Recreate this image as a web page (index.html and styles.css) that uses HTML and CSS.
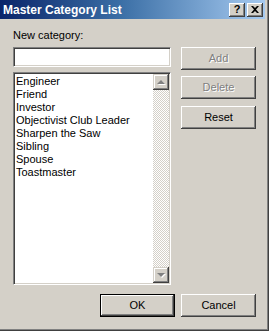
FILE: index.html
```html
<!DOCTYPE html>
<html>
<head>
<meta charset="utf-8">
<link rel="stylesheet" href="styles.css">
</head>
<body>
<div class="window">
  <div class="titlebar">
    <span class="title">Master Category List</span>
    <div class="caption-buttons">
      <span class="cap-btn help">?</span>
      <span class="cap-btn close">
        <svg width="8" height="7" viewBox="0 0 8 7"><path d="M0 0h2l2 2 2-2h2L5 3.5 8 7H6L4 5 2 7H0l3-3.5z" fill="#000"/></svg>
      </span>
    </div>
  </div>
  <div class="content">
    <div class="label">New category:</div>
    <div class="main">
      <div class="left">
        <div class="textbox"></div>
        <div class="listbox">
          <ul class="items">
            <li>Engineer</li>
            <li>Friend</li>
            <li>Investor</li>
            <li>Objectivist Club Leader</li>
            <li>Sharpen the Saw</li>
            <li>Sibling</li>
            <li>Spouse</li>
            <li>Toastmaster</li>
          </ul>
          <div class="scrollbar">
            <div class="sb-btn"><span class="arrow up"></span></div>
            <div class="sb-track"></div>
            <div class="sb-btn"><span class="arrow down"></span></div>
          </div>
        </div>
      </div>
      <div class="right">
        <div class="btn disabled add">Add</div>
        <div class="btn disabled delete">Delete</div>
        <div class="btn reset">Reset</div>
      </div>
      <div class="footer">
        <div class="btn default">OK</div>
        <div class="btn">Cancel</div>
      </div>
    </div>
  </div>
</div>
</body>
</html>
```
FILE: styles.css
```css
* { box-sizing: border-box; }
html, body { margin: 0; padding: 0; background: #d4d0c8; }
body { font-family: "Liberation Sans", Arial, sans-serif; font-size: 11px; color: #000; }

.window {
  width: 269px;
  height: 331px;
  background: #d4d0c8;
  box-shadow: inset -1px -1px #404040, inset -2px -2px #808080;
  overflow: hidden;
}

.titlebar {
  width: 265px;
  height: 19px;
  background: linear-gradient(to right, #0a246a 0%, #3a6ea5 45%, #a6caf0 100%);
  display: flex;
  align-items: center;
  justify-content: space-between;
  padding: 0 2px 0 3px;
}
.title {
  color: #fff;
  font-weight: bold;
  font-size: 12px;
  line-height: 14px;
}
.caption-buttons { display: flex; gap: 2px; }
.cap-btn {
  width: 16px;
  height: 14px;
  background: #d4d0c8;
  box-shadow: inset -1px -1px #404040, inset 1px 1px #fff, inset -2px -2px #808080;
  display: flex;
  align-items: center;
  justify-content: center;
  font-weight: bold;
  font-size: 11px;
  line-height: 14px;
}
.cap-btn svg { display: block; margin-top: -1px; }
.help { padding-bottom: 1px; }

.content { padding: 10px 0 0 13px; }
.label { line-height: 13px; height: 13px; margin-bottom: 5px; }

.main {
  display: grid;
  grid-template-columns: 158px 75px;
  column-gap: 10px;
}
.left { display: flex; flex-direction: column; gap: 5px; }

.textbox, .listbox {
  background: #fff;
  border: 1px solid;
  border-color: #808080 #fff #fff #808080;
  box-shadow: inset 1px 1px #404040, inset -1px -1px #d4d0c8;
}
.textbox { height: 20px; }
.listbox {
  height: 213px;
  display: flex;
  padding: 1px;
}
.items {
  list-style: none;
  margin: 0;
  padding: 1px 0 0 1px;
  flex: 1;
}
.items li { line-height: 13px; height: 13px; white-space: nowrap; }

.scrollbar {
  width: 16px;
  display: flex;
  flex-direction: column;
}
.sb-btn {
  height: 16px;
  background: #d4d0c8;
  box-shadow: inset -1px -1px #404040, inset 1px 1px #d4d0c8, inset -2px -2px #808080, inset 2px 2px #fff;
  display: flex;
  align-items: center;
  justify-content: center;
}
.sb-track {
  flex: 1;
  background: repeating-conic-gradient(#d4d0c8 0 25%, #fff 0 50%) 0 0 / 2px 2px;
}
.arrow {
  width: 0;
  height: 0;
  border-left: 4px solid transparent;
  border-right: 4px solid transparent;
  filter: drop-shadow(1px 1px 0 #fff);
}
.arrow.up { border-bottom: 4px solid #808080; }
.arrow.down { border-top: 4px solid #808080; }

.right {
  display: flex;
  flex-direction: column;
}
.btn {
  height: 23px;
  width: 75px;
  background: #d4d0c8;
  box-shadow: inset -1px -1px #404040, inset 1px 1px #fff, inset -2px -2px #808080;
  display: flex;
  align-items: center;
  justify-content: center;
  line-height: 13px;
}
.btn.delete { margin-top: 6px; }
.btn.reset { margin-top: 7px; }
.btn.disabled { color: #808080; text-shadow: 1px 1px #fff; }
.btn.default { border: 1px solid #000; }

.footer {
  grid-column: 1 / span 2;
  display: flex;
  justify-content: flex-end;
  gap: 6px;
  margin-top: 9px;
}
```
